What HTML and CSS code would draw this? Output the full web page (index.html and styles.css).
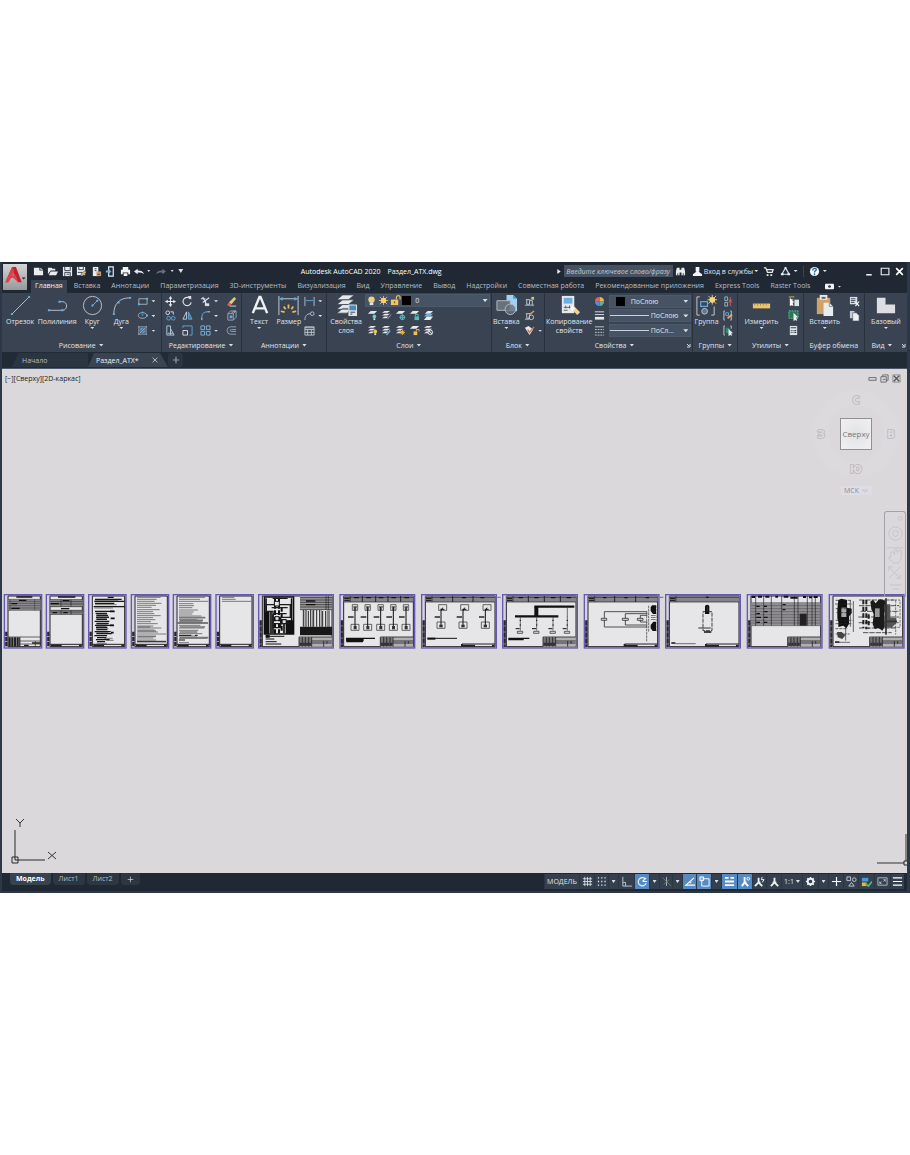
FILE: index.html
```html
<!DOCTYPE html>
<html lang="ru">
<head>
<meta charset="utf-8">
<title>Autodesk AutoCAD 2020 — Раздел_АТХ.dwg</title>
<link rel="stylesheet" href="styles.css">
</head>
<body>
<main class="window">
<header class="top">
  <button class="app-button" aria-label="Меню приложения"><svg viewBox="0 0 24 27"><path d="M2 19 9 3h4l6 16h-4l-2-5H8l-3 5z" fill="#c2222c"/><path d="m9 3 2 4-2 4 4 1 2 7-5-5H8l-3 5H2z" fill="#e5404a"/><path d="m10 8 2 4H9z" fill="#9c8386"/><path d="M19 14h4l-2 2z" fill="#222"/></svg></button>
  <div class="titlebar">
    <div class="quick">
      <button aria-label="Создать"><svg viewBox="0 0 12 12"><path d="M1 2h6v3h4v5H1z" fill="#e9ebee"/><path d="M8 2v2h3z" fill="#e9ebee"/></svg></button>
      <button aria-label="Открыть"><svg viewBox="0 0 12 12"><path d="M1 2h4l1 1h3v2H4L1 9z" fill="#e9ebee"/><path d="M4 6h8l-2 4H2z" fill="#e9ebee"/></svg></button>
      <button aria-label="Сохранить"><svg viewBox="0 0 12 12"><path d="M1 1h10v10H1z" fill="#e9ebee"/><path d="M3 1v4h6V1M3 11V7h6v4M5 9h3" fill="none" stroke="#35404d"/></svg></button>
      <button aria-label="Сохранить как"><svg viewBox="0 0 12 12"><path d="M1 1h9v9H1z" fill="#e9ebee"/><path d="M3 1v3h5V1M2 7h5" fill="none" stroke="#35404d"/><path d="m5 11 1-3 4-3 1 2-4 4z" fill="#e2b56b" stroke="#222b36" stroke-width=".5"/></svg></button>
      <button aria-label="Открыть из веба"><svg viewBox="0 0 12 12"><path d="M2 1h6v10H2z" fill="#e9ebee"/><path d="M4 3h2M4 5h2" stroke="#35404d"/><path d="M6 6h5v5H6z" fill="#d29c69"/><path d="M7 9h3" stroke="#35404d"/></svg></button>
      <button aria-label="Сохранить в вебе"><svg viewBox="0 0 12 12"><path d="M4 1h5v10H4z" fill="none" stroke="#e9ebee" stroke-width="1.3"/><path d="M1 5h3V3l3 3-3 3V7H1z" fill="#69b5e9"/></svg></button>
      <button aria-label="Печать"><svg viewBox="0 0 12 12"><path d="M3 1h6v3H3zM1 4h10v5H9V7H3v2H1zM4 8h4v3H4z" fill="#f1f3f5"/></svg></button>
      <button aria-label="Отменить"><svg viewBox="0 0 12 12"><path d="m0 6 4-3v2c4 0 6 1 7 4-2-2-4-2-7-2v2z" fill="#e9ebee"/></svg></button>
    </div>
    <div class="history"><i class="caret"></i><button aria-label="Повторить"><svg viewBox="0 0 12 12"><path d="M12 6 8 3v2C4 5 2 6 1 9c2-2 4-2 7-2v2z" fill="#66717d"/></svg></button><i class="caret"></i><i class="caret wide"></i></div>
    <h1 class="title"><span>Autodesk AutoCAD 2020</span><span>Раздел_АТХ.dwg</span></h1>
    <div class="search"><svg class="play" viewBox="0 0 4 6"><path d="M0 0v6l4-3z" fill="#e9ebee"/></svg><input type="text" aria-label="Поиск" placeholder="Введите ключевое слово/фразу"></div>
    <div class="account">
      <button aria-label="Найти"><svg viewBox="0 0 12 12"><path d="M2 2h3v8H1V6zM7 2h3l1 4v4H7zM5 4h2v3H5z" fill="#e9ebee"/><path d="M3 8v2M9 8v2" stroke="#26303c"/></svg></button>
      <button class="login"><svg viewBox="0 0 12 12"><path d="M4 1h4v5H7l4 3v2H1V9l4-3H4z" fill="#f1f3f5"/></svg>Вход в службы <i class="caret"></i></button>
      <button aria-label="Магазин"><svg viewBox="0 0 12 12"><path d="M1 2h2l2 5h5l1-3H4" fill="none" stroke="#e9ebee" stroke-width="1.4"/><path d="M4 9h2v2H4zM8 9h2v2H8z" fill="#e9ebee"/></svg></button>
      <button class="with-caret" aria-label="Autodesk"><svg viewBox="0 0 12 12"><path d="m6 2 4 7H2z" fill="none" stroke="#cfe0ee" stroke-width="1.3"/><path d="M5 1h2v2H5zM1 8h3v2H1zM8 8h3v2H8z" fill="#e9ebee"/></svg><i class="caret"></i></button>
      <button class="with-caret help" aria-label="Справка"><svg viewBox="0 0 12 12"><circle cx="6" cy="6" r="5" fill="#f2f6fb"/><path d="M4 5c0-3 4-3 4-1 0 1-2 1-2 3M6 8v2" fill="none" stroke="#2b6399" stroke-width="1.4"/></svg><i class="caret"></i></button>
    </div>
    <div class="winctl">
      <button aria-label="Свернуть"><svg viewBox="0 0 10 10"><path d="M2 8h5" stroke="#f2f3f4" stroke-width="1.4"/></svg></button>
      <button aria-label="Развернуть"><svg viewBox="0 0 10 10"><path d="M2 2h7v6H2z" fill="none" stroke="#f2f3f4"/></svg></button>
      <button aria-label="Закрыть"><svg viewBox="0 0 10 10"><path d="m2 2 6 6M8 2 2 8" stroke="#fff" stroke-width="1.5"/></svg></button>
    </div>
  </div>
  <nav class="tabs">
    <a href="#home" class="active">Главная</a><a href="#insert">Вставка</a><a href="#annotate">Аннотации</a><a href="#param">Параметризация</a><a href="#tools3d">3D-инструменты</a><a href="#visual">Визуализация</a><a href="#view">Вид</a><a href="#manage">Управление</a><a href="#output">Вывод</a><a href="#addins">Надстройки</a><a href="#collab">Совместная работа</a><a href="#apps">Рекомендованные приложения</a><a href="#express">Express Tools</a><a href="#raster">Raster Tools</a>
    <button class="with-caret" aria-label="Вид ленты"><svg viewBox="0 0 10 10"><rect x="0" y="2" width="10" height="6" rx="1" fill="#f2f3f4"/><circle cx="5" cy="5" r="1.5" fill="#26303c"/></svg><i class="caret"></i></button>
  </nav>
</header>

<div class="ribbon">
  <section class="panel">
    <div class="body draw">
      <button class="tool"><svg viewBox="0 0 24 24"><path d="M3 21 21 3" stroke="#b9c1ca"/><path d="M2 20h2v2H2zM20 2h2v2h-2z" fill="#63b4f0"/></svg>Отрезок</button>
      <button class="tool"><svg viewBox="0 0 24 24"><path d="M3 17h14c6 0 6-9 0-9h-3" fill="none" stroke="#b9c1ca"/><path d="M2 16h2v2H2zM16 16h2v2h-2zM13 7h2v2h-2z" fill="#63b4f0"/></svg>Полилиния</button>
      <button class="tool"><svg viewBox="0 0 24 24"><circle cx="12" cy="12" r="9.5" fill="none" stroke="#b9c1ca"/><path d="m12 12 5-5" stroke="#63b4f0"/><path d="M11 11h2v2h-2zM16 6h2v2h-2z" fill="#63b4f0"/></svg>Круг<i class="caret"></i></button>
      <button class="tool"><svg viewBox="0 0 24 24"><path d="M4 21C4 10 10 4 21 4" fill="none" stroke="#b9c1ca"/><path d="M3 20h2v2H3zM8 8h2v2H8zM20 3h2v2h-2z" fill="#63b4f0"/></svg>Дуга<i class="caret"></i></button>
      <div class="stack">
        <button class="with-caret" aria-label="Прямоугольник"><svg viewBox="0 0 12 12"><path d="M2 3h9v6H2z" fill="none" stroke="#aab4be"/><path d="M1 8h2v2H1zM10 2h2v2h-2z" fill="#63b4f0"/></svg><i class="caret"></i></button>
        <button class="with-caret" aria-label="Эллипс"><svg viewBox="0 0 12 12"><ellipse cx="6" cy="6" rx="4.5" ry="3" fill="none" stroke="#aab4be"/><path d="M5 2h2v1H5zM5 5h2v1H5zM10 5h2v2h-2z" fill="#63b4f0"/></svg><i class="caret"></i></button>
        <button class="with-caret" aria-label="Штриховка"><svg viewBox="0 0 12 12"><path d="M3 3h6v6H3z" fill="#447ba6"/><path d="M2 1v10M10 1v10M1 2h10M1 10h10M3 6l3-3M3 9l6-6M6 9l3-3" fill="none" stroke="#aab4be" stroke-width=".8"/></svg><i class="caret"></i></button>
      </div>
    </div>
    <button class="caption">Рисование <i class="caret"></i></button>
  </section>

  <section class="panel">
    <div class="body edit">
      <button aria-label="Перенести"><svg viewBox="0 0 12 12"><path d="M6 1v10M1 6h10" stroke="#e8eaed" stroke-width="1.2"/><path d="m6 0 2 3H4zM6 12l2-3H4zM0 6l3-2v4zM12 6 9 4v4z" fill="#e8eaed"/></svg></button>
      <button aria-label="Повернуть"><svg viewBox="0 0 12 12"><path d="M9 3a4.5 4.5 0 1 0 1 4" fill="none" stroke="#dde1e5" stroke-width="1.3"/><path d="M6 0h4v4z" fill="#dde1e5"/></svg></button>
      <button class="with-caret" aria-label="Обрезать"><svg viewBox="0 0 12 12"><path d="m3 1 5 10M10 2 3 7M1 3h5M6 5v6" stroke="#dde1e5" stroke-width="1.3"/><path d="M7 8h3v3H7z" fill="#dde1e5"/></svg><i class="caret"></i></button>
      <button aria-label="Стереть"><svg viewBox="0 0 12 12"><path d="m3 7 6-6 2 2-5 6z" fill="#e9c57d"/><path d="m3 7 3 2-2 2-3-1z" fill="#e35d4b"/><path d="M4 11h7" stroke="#dde1e5"/></svg></button>
      <button aria-label="Копировать"><svg viewBox="0 0 12 12"><circle cx="3" cy="3" r="2" fill="none" stroke="#dde1e5"/><circle cx="4" cy="9" r="2" fill="none" stroke="#63a8dc"/><circle cx="9" cy="9" r="2" fill="none" stroke="#63a8dc"/><path d="M6 2h3v3" fill="none" stroke="#dde1e5"/></svg></button>
      <button aria-label="Зеркало"><svg viewBox="0 0 12 12"><path d="M5 2v8H1z" fill="none" stroke="#c6d0d9"/><path d="M7 2v8h4z" fill="#397cab" stroke="#63a8dc"/></svg></button>
      <button class="with-caret" aria-label="Сопряжение"><svg viewBox="0 0 12 12"><path d="M2 11V8" stroke="#dde1e5"/><path d="M2 8c0-4 2-6 6-6" fill="none" stroke="#63a8dc"/><path d="M8 2h3" stroke="#dde1e5"/></svg><i class="caret"></i></button>
      <button aria-label="Расчленить"><svg viewBox="0 0 12 12"><path d="M2 4h6v7H2zM2 4l3-3h6L8 4M11 1v7l-3 3" fill="none" stroke="#86add0"/><path d="M4 6h3v3H4z" fill="#77a4c9"/><path d="m6 3 4-2" stroke="#e6a660"/></svg></button>
      <button aria-label="Растянуть"><svg viewBox="0 0 12 12"><path d="M2 1h4v10H2zM6 4l4 7H6M3 9h6" fill="none" stroke="#b7c9d7"/></svg></button>
      <button aria-label="Масштаб"><svg viewBox="0 0 12 12"><path d="M1 3V1h10v10H8" fill="none" stroke="#63a8dc"/><path d="M1 6h5v5H1z" fill="none" stroke="#dde1e5"/></svg></button>
      <button class="with-caret" aria-label="Массив"><svg viewBox="0 0 12 12"><path d="M1 1h4v4H1zM7 1h4v4H7zM1 7h4v4H1zM7 7h4v4H7z" fill="none" stroke="#82b5dc"/></svg><i class="caret"></i></button>
      <button aria-label="Смещение"><svg viewBox="0 0 12 12"><path d="M11 2H5c-5 0-5 8 0 8h6M11 5H6c-2 0-2 2 0 2h5" fill="none" stroke="#8faabd"/></svg></button>
    </div>
    <button class="caption">Редактирование <i class="caret"></i></button>
  </section>

  <section class="panel">
    <div class="body annot">
      <button class="tool"><svg viewBox="0 0 24 24"><path d="m5 20 7-17h1l7 17M7 15h11" fill="none" stroke="#f0f2f4" stroke-width="2.5"/></svg>Текст<i class="caret"></i></button>
      <button class="tool"><svg viewBox="0 0 24 24"><path d="M2 2v20M22 2v20M3 5h18" stroke="#c6cdd4" fill="none"/><path d="m2 5 4-2v4zM22 5l-4-2v4z" fill="#63a8dc"/><path d="M12 11v4M7 13l2 3M17 13l-2 3M4 18l4 1M20 18l-4 1" stroke="#e8ba5d" stroke-width="1.8"/></svg>Размер</button>
      <div class="stack">
        <button class="with-caret" aria-label="Линейный размер"><svg viewBox="0 0 12 12"><path d="M1 1v10M11 1v10" stroke="#b6c2cc"/><path d="M2 5h8" stroke="#63a8dc"/></svg><i class="caret"></i></button>
        <button class="with-caret" aria-label="Выноска"><svg viewBox="0 0 12 12"><path d="M1 11c0-4 2-7 6-7" fill="none" stroke="#b6c2cc"/><circle cx="9" cy="4" r="2" fill="none" stroke="#b6c2cc"/></svg><i class="caret"></i></button>
        <button aria-label="Таблица"><svg viewBox="0 0 12 12"><path d="M1 2h10v9H1zM1 5h10M1 8h10M4 5v6M8 5v6M1 3h10" fill="none" stroke="#c0c9d1"/></svg></button>
      </div>
    </div>
    <button class="caption">Аннотации <i class="caret"></i></button>
  </section>

  <section class="panel">
    <div class="body layers">
      <button class="tool"><svg viewBox="0 0 24 24"><path d="M8 1h12l-6 5H2zM8 6h12l-6 5H2zM8 11h12l-6 5H2zM8 15h8l-3 5H2z" fill="#e6e8ea" stroke="#3a4352" stroke-width=".7"/><path d="M14 11h9v12h-9z" fill="#dce3e9"/><path d="M15 12h7v5h-7z" fill="#438bc4"/><path d="M16 19h5M16 21h2" stroke="#3a4352"/></svg>Свойства слоя</button>
      <div class="layer-side">
        <div class="combo layer-combo">
          <svg viewBox="0 0 12 12"><circle cx="6" cy="5" r="3.5" fill="#f2cf7b"/><path d="M4 8h4v3H4z" fill="#dfe2e5"/></svg>
          <svg viewBox="0 0 12 12"><path d="M6 1v10M1 6h10M2 2l8 8M10 2l-8 8" stroke="#e8b958"/><circle cx="6" cy="6" r="3" fill="#f5cf73"/></svg>
          <svg viewBox="0 0 12 12"><path d="M7 5V3c0-3 4-3 4 0v2" fill="none" stroke="#e8b958" stroke-width="1.3"/><path d="M1 5h8v6H1z" fill="#f1c365"/><path d="M5 7v2" stroke="#463b29"/></svg>
          <i class="swatch"></i><select aria-label="Слой"><option>0</option></select><i class="caret"></i>
        </div>
        <div class="layer-grid">
          <button aria-label="Отключить"><svg viewBox="0 0 12 12"><path d="M4 1h7L8 4H1z" fill="#e6e8ea"/><circle cx="8" cy="7" r="2" fill="#5fd0cb"/><path d="M7 9h2v2H7z" fill="#dfe2e5"/></svg></button>
          <button aria-label="Изолировать"><svg viewBox="0 0 12 12"><path d="M4 1h6L7 3H1zM4 4h6L7 6H1zM4 7h4L6 9H1z" fill="#e6e8ea"/><path d="m7 10 4-5" stroke="#9caab8"/></svg></button>
          <button aria-label="Заморозить"><svg viewBox="0 0 12 12"><path d="M4 1h7L8 4H1z" fill="#e6e8ea"/><circle cx="8" cy="8" r="2.5" fill="none" stroke="#5dc3c4"/><path d="M5 8h6M8 5v6" stroke="#5dc3c4"/></svg></button>
          <button aria-label="Блокировать"><svg viewBox="0 0 12 12"><path d="M4 1h7L8 4H1z" fill="#e6e8ea"/><path d="M6 7h5v4H6z" fill="#59bdb7"/><path d="M7 7V5h3v2" fill="none" stroke="#59bdb7"/></svg></button>
          <button aria-label="Сделать текущим"><svg viewBox="0 0 12 12"><path d="M5 1h6L8 4H2z" fill="#e6e8ea"/><path d="M4 4h7L8 7H1z" fill="#6caee1"/><path d="M4 7h7l-3 4H1z" fill="#e6e8ea"/></svg></button>
          <button aria-label="Включить все"><svg viewBox="0 0 12 12"><path d="M4 1h6L7 3H1zM4 4h5L6 6H1zM4 7h3L6 9H1z" fill="#e6e8ea"/><circle cx="9" cy="7" r="2" fill="#f0c462"/><path d="M8 9h2v2H8z" fill="#dfe2e5"/></svg></button>
          <button aria-label="Отключить изоляцию"><svg viewBox="0 0 12 12"><path d="M4 1h6L7 3H1zM4 4h6L7 6H1zM4 7h4L6 9H1z" fill="#e6e8ea"/><path d="m6 11 4-5" stroke="#6cb4e6" stroke-width="1.5"/></svg></button>
          <button aria-label="Разморозить"><svg viewBox="0 0 12 12"><path d="M4 1h6L7 3H1zM4 4h5L6 6H1zM4 7h3L6 9H1z" fill="#e6e8ea"/><path d="M8 5v6M5 8h6M6 6l4 4M10 6l-4 4" stroke="#efc15c"/></svg></button>
          <button aria-label="Разблокировать"><svg viewBox="0 0 12 12"><path d="M4 1h7L8 4H1z" fill="#e6e8ea"/><path d="M5 7h4v4H5z" fill="#efc15c"/><path d="M8 7V5h3v2" fill="none" stroke="#efc15c"/></svg></button>
          <button aria-label="Копировать слой"><svg viewBox="0 0 12 12"><path d="M4 1h6L7 3H1zM4 4h6L7 6H1zM4 7h4L6 9H1z" fill="#e6e8ea"/><circle cx="8" cy="8" r="2.5" fill="#5a6472" stroke="#e6e8ea"/><path d="m6 6 4 4" stroke="#e6e8ea"/></svg></button>
        </div>
      </div>
    </div>
    <button class="caption">Слои <i class="caret"></i></button>
  </section>

  <section class="panel">
    <div class="body block">
      <button class="tool"><svg viewBox="0 0 24 24"><path d="M12 1h7l4 4v13H12z" fill="#a1d2f1"/><path d="M19 1v4h4" fill="#4a92c9"/><path d="M2 7h14v10H2z" fill="#67717d" stroke="#b2bac3"/><circle cx="16" cy="16" r="5.5" fill="#66717dcc" stroke="#b2bac3"/></svg>Вставка<i class="caret"></i></button>
      <div class="stack">
        <button aria-label="Создать блок"><svg viewBox="0 0 12 12"><path d="M1 10h10M3 4v5h3V5h3v5M2 4h5" fill="none" stroke="#c5ccd3"/><path d="M8 1h3v3H8z" fill="#efc15c"/></svg></button>
        <button aria-label="Редактор блоков"><svg viewBox="0 0 12 12"><path d="M1 10h5M3 4v5h3V5M2 4h5" fill="none" stroke="#c5ccd3"/><circle cx="8" cy="8" r="2.5" fill="none" stroke="#c5ccd3"/><path d="m6 5 5-4" stroke="#e6a660" stroke-width="1.5"/></svg></button>
        <button class="with-caret" aria-label="Атрибуты"><svg viewBox="0 0 12 12"><path d="m1 3 4-2 5 4-4 6z" fill="#e6e8ea"/><path d="m4 5 2 3 5-6" fill="none" stroke="#cc7850" stroke-width="1.5"/></svg><i class="caret"></i></button>
      </div>
    </div>
    <button class="caption">Блок <i class="caret"></i></button>
  </section>

  <section class="panel">
    <div class="body props">
      <button class="tool"><svg viewBox="0 0 24 24"><path d="M4 2h13v18H4z" fill="#e6e8ea"/><path d="M6 4h9v6H6z" fill="#69afe0"/><path d="M6 14h8M6 17h4M8 12v3M12 12v3" stroke="#59636f"/><path d="m13 14 3-2 7 7-3 3z" fill="#f3d489"/><path d="m13 14 2-2 3 3-3 3z" fill="#fff"/></svg>Копирование свойств</button>
      <div class="prop-grid">
        <svg viewBox="0 0 12 12"><path d="M6 6V1a5 5 0 0 1 5 5z" fill="#f0b74b"/><path d="M6 6h5a5 5 0 0 1-5 5z" fill="#55b6a7"/><path d="M6 6v5a5 5 0 0 1-5-5z" fill="#598bdb"/><path d="M6 6H1a5 5 0 0 1 5-5z" fill="#e06565"/></svg>
        <div class="combo"><i class="swatch"></i><select aria-label="Цвет"><option>ПоСлою</option></select><i class="caret"></i></div>
        <svg viewBox="0 0 12 12"><path d="M1 2h10M1 5h10" stroke="#e3e6e9"/><path d="M1 9h10" stroke="#e3e6e9" stroke-width="3"/></svg>
        <div class="combo"><i class="rule"></i><select aria-label="Вес линий"><option>ПоСлою</option></select><i class="caret"></i></div>
        <svg viewBox="0 0 12 12"><path d="M1 2h10" stroke="#c5ccd3"/><path d="M1 5h10M1 8h10M1 11h10" stroke="#c5ccd3" stroke-dasharray="2 1"/></svg>
        <div class="combo"><i class="rule"></i><select aria-label="Тип линий"><option>ПоСл...</option></select><i class="caret"></i></div>
      </div>
    </div>
    <div class="caption with-launcher"><button>Свойства <i class="caret"></i></button><button class="launcher" aria-label="Параметры свойств"><svg viewBox="0 0 6 6"><path d="M2 2l2 2M5 2v3H2" fill="none" stroke="#d5dae0"/></svg></button></div>
  </section>

  <section class="panel">
    <div class="body pair">
      <button class="tool"><svg viewBox="0 0 24 24"><path d="M5 3H2v19h3M17 22h3V13" fill="none" stroke="#c5ccd3"/><path d="M6 8h7v5H6z" fill="none" stroke="#63a8dc" stroke-width="1.3"/><circle cx="10" cy="18" r="3" fill="#687582" stroke="#b6c2cc"/><path d="M18 1v10M13 6h10M14 2l8 8M22 2l-8 8" stroke="#f3c465"/><circle cx="18" cy="6" r="3" fill="#f9d57e"/></svg>Группа</button>
      <div class="stack">
        <button aria-label="Разгруппировать"><svg viewBox="0 0 12 12"><path d="M2 1h3v4H2zM2 7h3v4H2z" fill="none" stroke="#9fb4c5"/><path d="M8 1v10M6 4l4 3M10 4 6 7" stroke="#cf5d64"/></svg></button>
        <button aria-label="Редактировать группу"><svg viewBox="0 0 12 12"><path d="M2 1H1v10h1M8 1h1v10H8" fill="none" stroke="#c5ccd3"/><path d="M3 3h3v3H3z" fill="none" stroke="#63a8dc"/><path d="m5 9 5-4" stroke="#e8a560" stroke-width="2"/></svg></button>
        <button aria-label="Выбор группы"><svg viewBox="0 0 12 12"><path d="M2 1H1v10h1M8 1h1v3" fill="none" stroke="#c5ccd3"/><path d="M3 3h4v6H3z" fill="#388766"/><path d="m6 4 5 5H9l1 3-2-1-2 1z" fill="#e9ecef"/></svg></button>
      </div>
    </div>
    <button class="caption">Группы <i class="caret"></i></button>
  </section>

  <section class="panel">
    <div class="body pair utilities">
      <button class="tool"><svg viewBox="0 0 24 24"><path d="M3 10h18v5H3z" fill="#eec46b"/><path d="M5 10v2M8 10v2M11 10v2M14 10v2M17 10v2" stroke="#a88b4c"/></svg>Измерить<i class="caret"></i></button>
      <div class="stack">
        <button aria-label="Выбрать подобные"><svg viewBox="0 0 12 12"><path d="M1 1h6M2 4h4" stroke="#e8ba5d"/><path d="M7 4h5v7H7z" fill="#dde2e8"/><path d="m2 2 5 5H5l1 4-2-1-2 1z" fill="#fff"/></svg></button>
        <button aria-label="Быстрый выбор"><svg viewBox="0 0 12 12"><path d="M1 1h10v8H1z" fill="#2b7557" stroke="#58c894" stroke-dasharray="2 1"/><path d="m6 3 5 5H9l1 4-2-1-2 1z" fill="#e9ecef"/></svg></button>
        <button aria-label="Калькулятор"><svg viewBox="0 0 12 12"><path d="M2 1h8v10H2z" fill="#dde2e8"/><path d="M3 3h6M3 6h1M5 6h1M7 6h2M3 8h1M5 8h1M7 8h2" stroke="#3a4352" stroke-width="1.2"/></svg></button>
      </div>
    </div>
    <button class="caption">Утилиты <i class="caret"></i></button>
  </section>

  <section class="panel">
    <div class="body pair clipboard">
      <button class="tool"><svg viewBox="0 0 24 24"><path d="M4 4h14v17H4z" fill="#d1a16a"/><path d="M7 1h8v5H7z" fill="#e6e8ea"/><path d="M9 3h4v2H9z" fill="#59636f"/><path d="M11 9h6l4 4v10H11z" fill="#e9ecef"/><path d="M17 9v4h4" fill="none" stroke="#858e99"/></svg>Вставить<i class="caret"></i></button>
      <div class="stack">
        <button aria-label="Вырезать"><svg viewBox="0 0 12 12"><path d="M1 1h8v8H1z" fill="#dde2e8"/><path d="M2 3h5M2 5h5M2 7h4" stroke="#3a4352"/><path d="m7 6 4 5M11 6l-4 5" stroke="#f3f4f5" stroke-width="1.3"/></svg></button>
        <button aria-label="Копировать"><svg viewBox="0 0 12 12"><path d="M1 1h5v8H1z" fill="#c5ccd3"/><path d="M4 3h4l3 3v6H4z" fill="#eef0f2" stroke="#3a4352" stroke-width=".6"/></svg></button>
      </div>
    </div>
    <span class="caption">Буфер обмена</span>
  </section>

  <section class="panel">
    <div class="body single">
      <button class="tool"><svg viewBox="0 0 24 24"><path d="M3 4h9v7h10v9H3z" fill="#dcdee1"/></svg>Базовый<i class="caret"></i></button>
    </div>
    <div class="caption with-launcher"><button>Вид <i class="caret"></i></button><button class="launcher" aria-label="Параметры вида"><svg viewBox="0 0 6 6"><path d="M2 2l2 2M5 2v3H2" fill="none" stroke="#d5dae0"/></svg></button></div>
  </section>
</div>

<nav class="files">
  <a href="#start">Начало</a>
  <div class="current"><a href="#drawing">Раздел_АТХ*</a><button aria-label="Закрыть файл"><svg viewBox="0 0 10 10"><path d="m2 2 6 6M8 2 2 8" stroke="#b6bec6" stroke-width="1.2"/></svg></button></div>
  <button class="add" aria-label="Новый файл"><svg viewBox="0 0 10 10"><path d="M5 1v8M1 5h8" stroke="#8e979f" stroke-width="1.5"/></svg></button>
</nav>

<div class="canvas">
  <svg class="sheets" viewBox="6 0 2715 216" role="img" aria-label="Листы чертежа">
    <defs>
      <g id="small">
        <rect x="1" y="1" width="112" height="160" fill="#d5d2e2" stroke="#6558b5" stroke-width="4"/>
        <path d="M12 5h97v152H12z" fill="#e6e5e7" stroke="#252429" stroke-width="3"/>
        <path d="M7 112v46" stroke="#29272f" stroke-width="7" stroke-dasharray="13 2"/>
      </g>
      <g id="large">
        <rect x="1" y="1" width="224" height="160" fill="#d5d2e2" stroke="#6558b5" stroke-width="4"/>
        <path d="M12 5h209v152H12z" fill="#e6e5e7" stroke="#252429" stroke-width="3"/>
        <path d="M7 78v80" stroke="#29272f" stroke-width="7" stroke-dasharray="16 2"/>
      </g>
      <g id="foot"><path d="M12 150h97" stroke="#222" stroke-width="3"/><path d="M15 154h32M99 154h8" stroke="#222" stroke-width="5"/></g>
      <g id="stamp"><path d="M122 128h98v29h-98z" fill="#b1afb3"/><path d="M122 128h98M122 134h37M122 140h98M122 146h98M122 152h37M122 128v29M132 128v29M141 128v29M151 128v29M160 128v29M196 140v17M206 140v8" stroke="#222" stroke-width="2.5"/><path d="M124 150h34" stroke="#333" stroke-width="9" stroke-dasharray="7 2"/></g>
      <g id="band"><path d="M12 5h209v18H12z" fill="#858387"/><path d="M12 9h209M12 23h209M32 5v18" stroke="#222" stroke-width="2"/><path d="M14 12h16M14 18h16" stroke="#222" stroke-width="4"/></g>
      <g id="unit"><path d="M-8 31h16v17H-8zM-12 90h24v18h-24z" fill="none" stroke="#262626" stroke-width="2"/><path d="M0 38v66M-5 38H6M-4 44h8" stroke="#111" stroke-width="3"/><path d="M-4 95h9v10h-9z" fill="#333"/><path d="M-21 68h17" stroke="#111" stroke-width="4"/></g>
      <g id="unit-wide"><path d="M-10 31h24v17h-24zM-15 83h24v19h-24z" fill="none" stroke="#262626" stroke-width="2"/><path d="M2 40-3 50v45M-5 45H7" fill="none" stroke="#111" stroke-width="3"/><path d="M-8 91h10v8H-8z" fill="#333"/><path d="M-22 68h16" stroke="#111" stroke-width="4"/></g>
      <g id="short-foot"><path d="M122 149h99" stroke="#222" stroke-width="3"/><path d="M122 149v8M125 154h36M212 154h7" stroke="#222" stroke-width="6"/></g>
      <g id="lamp"><path d="M0 67v42" stroke="#333" stroke-width="2"/><path d="M-9 111H7v6H-9z" fill="#ddd" stroke="#222" stroke-width="2"/><path d="M-14 103h12M-2 78h4M-2 92h4" stroke="#111" stroke-width="3"/></g>
    </defs>

    <g transform="translate(12 28)"><use href="#small"/><path d="M12 15h98v33H12z" fill="#8c8a8e"/><path d="M12 15h98M12 21h98M12 27h98M12 34h98M12 41h98M12 48h98M18 15v33M92 15v33" stroke="#333" stroke-width="1.5"/><path d="M37 8h48M45 18h22M22 28h18M22 42h25" stroke="#111" stroke-width="4"/><path d="M12 128h97M12 134h36M12 140h97M12 146h36M12 152h36M48 149h61M48 128v29M94 140v17" stroke="#222" stroke-width="2"/><path d="M14 142h34" stroke="#222" stroke-width="27" stroke-dasharray="6 2"/><path d="M84 146h25M60 153h14" stroke="#222" stroke-width="4"/></g>
    <g transform="translate(138 28)"><use href="#small"/><use href="#foot"/><path d="M12 16h98v21H12zM12 48h98v12H12z" fill="#918f93"/><path d="M12 16h98M12 22h98M12 29h98M12 37h98M12 48h98M12 60h98M12 53h98M45 16v20M75 16v20M45 48v12M75 48v12" stroke="#222" stroke-width="2"/><path d="M36 8h52M50 19h20M14 28h25M45 43h25M20 55h13M52 55h13" stroke="#111" stroke-width="4"/></g>
    <g transform="translate(265 28)"><use href="#small"/><use href="#foot"/><path d="M58 9h18M20 15h80M18 21h90M20 27h58M16 37h94M22 57h34M20 51h55M24 63h35M23 69h39M24 75h32M19 81h44M24 87h37M20 93h55M23 99h34M24 106h33M19 112h48M24 118h46M18 124h38M26 130h28M23 136h41M26 142h24" stroke="#171717" stroke-width="4"/><path d="M20 18h70M20 31h65M18 41h56M24 60h32M24 66h37M25 72h31M24 90h34M24 96h31M23 103h37M24 115h36M48 132h25M54 138h22M25 147h30" stroke="#474747" stroke-width="2"/><path d="M65 51h14M67 72h12M65 93h12M68 115h8" stroke="#111" stroke-width="5"/></g>
    <g transform="translate(393 28)"><use href="#small"/><use href="#foot"/><path d="M18 9h71M18 15h59M18 21h53M18 27h73M18 33h57M18 39h44M18 46h68M18 52h48M18 58h52M18 64h71M18 70h48M18 76h55M18 82h42M18 88h62M18 95h49M18 101h73M18 107h52M18 113h63M18 119h87M18 125h57M18 131h49M18 137h57M18 143h88" fill="none" stroke="#444" stroke-width="2"/><path d="M20 98h38M20 110h55M20 127h55" stroke="#777" stroke-width="4"/><path d="M18 141h87" stroke="#222" stroke-width="3"/></g>
    <g transform="translate(519 28)"><use href="#small"/><use href="#foot"/><path d="M18 9h78M18 15h63M18 21h88M18 28h43M18 34h45M18 40h40M18 47h57M18 53h44M18 59h40M18 65h67M18 75h55M18 82h69M18 93h64M18 101h75M18 108h58M18 118h70M18 125h54M18 132h84M18 145h30" stroke="#444" stroke-width="2"/><path d="M18 70h79M20 78h70M20 98h76M20 113h53M20 130h86" stroke="#777" stroke-width="5"/><path d="M14 86h91M18 123h37M66 123h8M18 137h18" stroke="#111" stroke-width="3"/></g>
    <g transform="translate(647 28)"><use href="#small"/><use href="#foot"/><path d="M19 9h37M19 15h41M19 21h87" stroke="#444" stroke-width="2"/></g>

    <g transform="translate(775 28)"><use href="#large"/>
      <path d="M18 8h88v111H18z" fill="none" stroke="#111" stroke-width="4"/><path d="M18 52h14v67H18zM82 78h24v41H82z" fill="#111"/><path d="M23 12v105M31 52v65M38 50v67M44 60v57M100 12v105M94 78v39M88 79v38M77 88v29" stroke="#111" stroke-width="5"/><path d="M50 10v108M62 10v107M70 38v76" stroke="#111" stroke-width="6" stroke-dasharray="14 5"/><path d="M24 31h72v38H67v31H44V51H24zM43 12h45M40 40h48M45 58h40M43 76h42M50 88h42" fill="none" stroke="#1b1b1b" stroke-width="4"/><path d="M48 21h15v14H48zM50 67h12v11H50z" fill="#e6e5e7" stroke="#111" stroke-width="3"/><path d="M22 126h56M22 134h26M22 142h33M22 149h47" stroke="#111" stroke-width="3"/><path d="M22 126h12" stroke="#111" stroke-width="9"/>
      <path d="M125 5h96v41h-96z" fill="#9b999d"/><path d="M125 10h96M125 17h96M125 24h96M125 31h96M125 38h96M125 46h96M203 5v41M210 5v41" stroke="#222" stroke-width="2"/><path d="M143 20h28M143 31h28" stroke="#111" stroke-width="4"/><path d="M135 47v50M143 47v50M150 50v47M157 47v50M166 47v50M175 47v50M184 47v50M193 50v47M202 50v47M212 48v50" stroke="#222" stroke-width="3"/><path d="M140 48v50M162 48v50M189 48v50M207 48v50" stroke="#777" stroke-width="3"/><path d="M125 97h96v26h-96z" fill="#181818"/><use href="#stamp"/></g>
    <g transform="translate(1019 28)"><use href="#large"/><use href="#band"/><path d="M68 5v18M108 5v18M145 5v18M183 5v18" stroke="#222" stroke-width="3"/><path d="M43 10h15M80 10h14M117 10h14M155 10h14M194 10h14" stroke="#111" stroke-width="4"/><use href="#unit" x="46"/><use href="#unit" x="84"/><use href="#unit" x="123"/><use href="#unit" x="161"/><use href="#unit" x="199"/><path d="M19 132h87M20 142h50" stroke="#111" stroke-width="4"/><path d="M19 137h53" stroke="#111" stroke-width="7"/><use href="#stamp"/></g>
    <g transform="translate(1264 28)"><use href="#large"/><use href="#band"/><path d="M94 5v18M155 5v18" stroke="#222" stroke-width="3"/><path d="M57 10h14M122 10h12M177 10h12" stroke="#111" stroke-width="4"/><use href="#unit-wide" x="62"/><use href="#unit-wide" x="128"/><use href="#unit-wide" x="195"/><path d="M19 132h88" stroke="#111" stroke-width="3"/><path d="M18 133h24" stroke="#111" stroke-width="6"/><use href="#short-foot"/></g>
    <g transform="translate(1507 28)"><use href="#large"/><use href="#band"/><path d="M78 5v18M126 5v18M174 5v18" stroke="#222" stroke-width="3"/><path d="M49 10h13M96 10h13M146 10h13M193 10h13" stroke="#111" stroke-width="4"/><path d="M38 66h130M96 37h120" stroke="#111" stroke-width="7"/><path d="M96 37h12v29H96z" fill="#111"/><use href="#lamp" x="54"/><use href="#lamp" x="103"/><use href="#lamp" x="152"/><use href="#lamp" x="195"/><path d="M195 40v28" stroke="#333" stroke-width="2"/><path d="M18 132h63M18 136h46" stroke="#111" stroke-width="4"/><use href="#stamp"/></g>
    <g transform="translate(1752 28)"><use href="#large"/><use href="#band"/><path d="M92 5v18M155 5v18" stroke="#222" stroke-width="3"/><path d="M57 10h10M121 10h10M185 10h10" stroke="#111" stroke-width="4"/><path d="M190 52H61v46h129M190 58h-66v34h66M190 63h-21v20h21" fill="none" stroke="#333" stroke-width="2.5"/><path d="M52 72h16v6H52zM115 72h18v6h-18zM160 72h17v6h-17z" fill="#ddd" stroke="#111" stroke-width="2"/><path d="M194 34v80M188 53v88M219 33v79" stroke="#333" stroke-width="2" stroke-dasharray="8 2"/><path d="m200 39 4-6h12v26h-9l-7-9zM200 92l8-10h8v28h-10l-6-8z" fill="#111"/><path d="M208 62v18" stroke="#555" stroke-width="14" stroke-dasharray="2 4"/><use href="#short-foot"/></g>
    <g transform="translate(1996 28)"><use href="#large"/><use href="#band"/><path d="M122 9h8" stroke="#111" stroke-width="4"/><path d="M119 35q7-8 13 0v24h-13z" fill="#111"/><path d="M113 52h27v57h-27z" fill="none" stroke="#222" stroke-width="2.5" stroke-dasharray="12 3"/><path d="M126 35v16M99 101h37" stroke="#333" stroke-width="3"/><path d="M116 113h22M18 146h12" stroke="#111" stroke-width="4"/><path d="M30 148h61" stroke="#333" stroke-width="2"/><use href="#short-foot"/></g>
    <g transform="translate(2241 28)"><use href="#large"/><path d="M12 25h209v69H12z" fill="#929094"/><path d="M12 25h209M12 34h209M12 43h209M12 52h209M12 61h209M12 69h209M12 78h209M12 86h209M12 94h209" stroke="#474747" stroke-width="1.5"/><path d="M26 5v89M50 5v89M73 5v89M104 5v89M142 5v89M153 5v89M181 5v89M195 5v89M205 5v89" stroke="#222" stroke-width="2"/><path d="M14 8h10M33 7h12M55 7h12M85 7h8M110 7h14M130 10h22M168 8h9M186 9h9M200 8h12" stroke="#111" stroke-width="6"/><path d="M28 36h10M28 58h11M28 69h14M28 84h11M51 36h9M52 52h10M51 69h11M51 84h10M107 31h9M107 46h8M160 61h15" stroke="#111" stroke-width="4"/><path d="M158 58h21v36h-21z" fill="#222"/><use href="#stamp"/></g>
    <g transform="translate(2487 28)"><use href="#large"/>
      <path d="M28 17l9-4 17 4v23l14 3v14l-8 9v23l-8 13-9-8-15 4V82l-3-10V45z" fill="#111"/><path d="M37 40h15v28H37z" fill="#aaa"/><path d="M20 18h47M18 29h50M20 43h48M22 55h48M20 78h50M20 88h49M19 103h37M20 119h42" stroke="#222" stroke-width="2" stroke-dasharray="9 3"/><path d="M24 113h14l11 10-9 11-14-5z" fill="#444"/><path d="M64 17v80M73 20v93M50 99v40" stroke="#222" stroke-width="2"/>
      <path d="M90 17h105M90 34h120M95 51h115M88 68h122M89 85h120M90 101h112M102 115h86" stroke="#555" stroke-width="3" stroke-dasharray="16 3"/><path d="M103 17v84M112 17v88M119 60v43" stroke="#222" stroke-width="6" stroke-dasharray="13 7"/><path d="M124 22l8-6 8 11 8-10 6-2 16 4 3 26-8 12 4 37-9 15-11-8-12 3-6-14 3-31-7-14z" fill="#1a1a1a"/><path d="M138 42h14v26h-14z" fill="#999"/><path d="M166 30h18v40h18v16l-14 14h-22z" fill="#555"/><path d="M171 12v109M174 81h30" stroke="#333" stroke-width="5"/><path d="M185 17h28v82h-28M200 17v104" stroke="#444" stroke-width="2" fill="none" stroke-dasharray="8 3"/><path d="M18 144h45" stroke="#333" stroke-width="2"/><path d="M18 143h13" stroke="#111" stroke-width="4"/><use href="#stamp"/></g>
    <path d="M1492 37h10M1980 37h10" stroke="#333" stroke-width="2"/>
  </svg>

  <div class="view-label"><button>[−]</button><button>[Сверху]</button><button>[2D-каркас]</button></div>
  <div class="doc-controls">
    <button aria-label="Свернуть вид"><svg viewBox="0 0 10 10"><path d="M1 4h8v3H1z" fill="none" stroke="#666"/></svg></button>
    <button aria-label="Восстановить вид"><svg viewBox="0 0 10 10"><path d="M1 3h6v6H1zM3 3V1h6v6H7M3 6h3" fill="none" stroke="#666"/></svg></button>
    <button aria-label="Закрыть вид"><svg viewBox="0 0 10 10"><path d="M1 1h8v8H1z" fill="none" stroke="#888"/><path d="m2 2 6 6M8 2 2 8" stroke="#555" stroke-width="1.5"/></svg></button>
  </div>
  <div class="compass">
    <button class="n">С</button><button class="w">З</button><button class="cube">Сверху</button><button class="e">В</button><button class="s">Ю</button>
  </div>
  <button class="ucs-name">МСК <svg viewBox="0 0 8 4"><path d="M1 1h6L4 3z" fill="none" stroke="#c8c6d0"/></svg></button>
  <div class="navbar">
    <svg viewBox="0 0 21 84"><g fill="none" stroke="#c6c4c8"><circle cx="16" cy="4" r="2"/><circle cx="11" cy="20" r="7"/><circle cx="11" cy="20" r="3"/><path d="M2 35h17M6 45v-5l2-1 2 3v-5l2-1 1 4 2-3 2 1v8l-3 5h-5l-5-5 1-2zM4 55l12 12M16 55 4 67M4 55h4M4 55v4M16 67h-4M16 67v-4"/><path d="M5 74h12M8 78h7"/></g></svg>
  </div>
  <svg class="ucs" viewBox="0 0 46 46"><path d="M4 12v30h30M1 39h6v6H1z" fill="none" stroke="#29292b"/><path d="m5 1 4 4 4-4M9 5v4M37 34l8 7M45 34l-8 7" fill="none" stroke="#333"/></svg>
  <svg class="cursor" viewBox="0 0 30 40"><path d="M0 32h27M29 3v27" stroke="#333"/><path d="M27 30h5v4h-5z" fill="none" stroke="#222"/></svg>
</div>

<footer class="bottom">
  <nav class="layouts"><a href="#model" class="active">Модель</a><a href="#sheet1">Лист1</a><a href="#sheet2">Лист2</a><button aria-label="Новый лист"><svg viewBox="0 0 10 10"><path d="M5 1v8M1 5h8" stroke="#d4d9de"/></svg></button></nav>
  <div class="status">
    <button>МОДЕЛЬ</button>
    <button aria-label="Сетка"><svg viewBox="0 0 12 12"><path d="M3 1v10M6 1v10M9 1v10M1 3h10M1 6h10M1 9h10" stroke="#e1e5e9" stroke-width=".9"/></svg></button>
    <button aria-label="Привязка"><svg viewBox="0 0 12 12"><path d="M2 2h9M2 6h9M2 10h9" stroke="#e1e5e9" stroke-width="1.4" stroke-dasharray="1.4 2.2"/></svg></button>
    <button aria-label="Параметры привязки"><i class="caret"></i></button>
    <button aria-label="Орто"><svg viewBox="0 0 12 12"><path d="M2 1v10h10M2 7h3v4" fill="none" stroke="#c4cbd2"/></svg></button>
    <button class="on" aria-label="Полярное отслеживание"><svg viewBox="0 0 12 12"><path d="M9 3a4.5 4.5 0 1 0 1 5M6 6h5M6 6l4-4" fill="none" stroke="#edf4fb" stroke-width="1.2"/></svg></button>
    <button aria-label="Углы"><i class="caret"></i></button>
    <button aria-label="Изометрия"><svg viewBox="0 0 12 12"><path d="m2 2 9 9" stroke="#b35f57"/><path d="M6 1v10" stroke="#aeb6bf"/><path d="m9 4-6 5" stroke="#53895b"/></svg></button>
    <button aria-label="Параметры изометрии"><i class="caret"></i></button>
    <button class="on" aria-label="Объектное отслеживание"><svg viewBox="0 0 12 12"><path d="M11 2 2 10h10" fill="none" stroke="#fff" stroke-width="1.2"/><path d="M6 6h2v2H6z" fill="#d9edff"/></svg></button>
    <button class="on" aria-label="Объектная привязка"><svg viewBox="0 0 12 12"><path d="M3 3h8v8H3z" fill="none" stroke="#fff"/><path d="M1 1h4v4H1z" fill="#79b5e7" stroke="#fff"/></svg></button>
    <button aria-label="Параметры объектной привязки"><i class="caret"></i></button>
    <button class="on" aria-label="Вес линий"><svg viewBox="0 0 12 12"><path d="M1 2h4M7 2h4M1 6h10M1 10h10" stroke="#fff" stroke-width="2"/></svg></button>
    <button class="on" aria-label="Аннотации"><svg viewBox="0 0 12 12"><path d="M5 1v6l-3 4M5 7l4 4M4 7h3" fill="none" stroke="#fff" stroke-width="2"/><circle cx="9" cy="3" r="1.5" fill="none" stroke="#fff"/></svg></button>
    <button aria-label="Автомасштаб"><svg viewBox="0 0 12 12"><path d="M5 2v5l-4 4M5 7l4 4M4 7h3" fill="none" stroke="#eef0f2" stroke-width="2"/><path d="m9 1-1 3h3L9 7" fill="none" stroke="#fff"/></svg></button>
    <button aria-label="Масштаб аннотаций"><svg viewBox="0 0 12 12"><path d="M6 2v5l-4 4M6 7l4 4M4 7h4" fill="none" stroke="#eef0f2" stroke-width="2"/></svg></button>
    <button>1:1 <i class="caret"></i></button>
    <button aria-label="Рабочее пространство"><svg viewBox="0 0 12 12"><circle cx="6" cy="6" r="3" fill="none" stroke="#eef0f2" stroke-width="2"/><path d="M6 1v2M6 9v2M1 6h2M9 6h2M2.5 2.5 4 4M8 8l1.5 1.5M9.500 2.500 8 4M4 8 2.500 9.500" stroke="#eef0f2" stroke-width="1.6"/></svg></button>
    <button aria-label="Выбор пространства"><i class="caret"></i></button>
    <button aria-label="Монитор аннотаций"><svg viewBox="0 0 12 12"><path d="M6 1v10M1 6h10" stroke="#fff" stroke-width="1.3"/></svg></button>
    <button aria-label="Изолировать объекты"><svg viewBox="0 0 12 12"><path d="M1 1h4v4H1zM6 7l3 4H3z" fill="none" stroke="#c4cbd2"/><circle cx="9" cy="4" r="2" fill="none" stroke="#c4cbd2"/></svg></button>
    <button aria-label="Производительность"><svg viewBox="0 0 12 12"><path d="M1 2h7v4H1z" fill="#4699d4"/><path d="M1 7h5v4H1z" fill="#e0b650"/><path d="m5 8 3 3 4-5" fill="none" stroke="#57ad6d" stroke-width="2"/></svg></button>
    <button aria-label="Очистить экран"><svg viewBox="0 0 12 12"><path d="M1 2h10v8H1zM3 8l2-2M3 6v2h2M9 4 7 6M7 4h2v2" fill="none" stroke="#c4cbd2" stroke-width=".9"/></svg></button>
    <button aria-label="Адаптация"><svg viewBox="0 0 12 12"><path d="M1 2h10M1 6h10M1 10h10" stroke="#fff" stroke-width="1.3"/></svg></button>
  </div>
</footer>
</main>
</body>
</html>
```

FILE: styles.css
```css
* { box-sizing: border-box; }
body {
  margin: 0;
  min-height: 100vh;
  display: flex;
  align-items: center;
  background: #fff;
  font: 7px/9px "Open Sans", "Noto Sans", sans-serif;
  color: #e0e4e8;
}
button, select, input { font: inherit; color: inherit; }
button { display: flex; align-items: center; justify-content: center; margin: 0; padding: 0; border: 0; background: none; }
a { color: inherit; text-decoration: none; }
svg { display: block; width: 11px; height: 11px; flex: none; }
.caret { flex: none; display: inline-block; width: 5px; height: 3px; background: #dce0e4; clip-path: polygon(0 0, 100% 0, 50% 100%); }
.with-caret { gap: 3px; }
.with-caret .caret { width: 4px; height: 2px; }

.window { width: 100%; border: solid #2c3747; border-width: 0 3px 2px 2px; background: #202933; }

/* Title bar and ribbon tabs */
.top { display: grid; grid-template: 18px 13px / 29px 1fr; background: #202933; }
.app-button { grid-row: 1 / 3; margin: 2px 4px 3px 1px; background: linear-gradient(#d5d5d7, #96989c); }
.app-button svg { width: 24px; height: 26px; }
.titlebar { display: grid; grid-template-columns: 116fr 38fr 371fr 116fr 153fr 80fr; align-items: center; min-width: 0; }
.quick { display: grid; grid-template-columns: repeat(8, 1fr); }
.history { display: flex; align-items: center; justify-content: space-between; padding-right: 2px; }
.history .caret { width: 3px; height: 2px; }
.history .wide { width: 5px; height: 4px; }
.title { display: flex; justify-content: center; gap: 7px; margin: 0; font-size: 7px; font-weight: 400; color: #fff; white-space: nowrap; }
.search { display: flex; align-items: center; gap: 3px; }
.play { width: 4px; height: 5px; }
.search input { flex: 1; min-width: 0; height: 12px; padding: 0 2px; border: 0; background: #465261; }
.search input::placeholder { color: #c2c8cf; font-style: italic; opacity: 1; }
.account { display: flex; align-items: center; justify-content: space-between; padding-left: 2px; }
.login { gap: 1px; white-space: nowrap; }
.login .caret { width: 4px; height: 2px; }
.help { padding-left: 5px; border-left: 1px solid #3b4550; }
.winctl { display: flex; justify-content: flex-end; gap: 4px; padding-right: 2px; }
.tabs { display: flex; align-items: stretch; gap: 3px; color: #b7bdc5; white-space: nowrap; }
.tabs a { padding: 1px 4px 2px; }
.tabs .active { background: #3a4352; color: #eef0f2; }
.tabs > button { margin-left: 8px; }
.tabs svg { width: 9px; height: 9px; }

/* Ribbon */
.ribbon {
  display: grid;
  grid-template-columns: 159fr 80fr 85fr 164fr 53fr 148fr 45fr 65fr 61fr 42fr;
  background: #3a4352;
}
.panel { display: flex; flex-direction: column; min-width: 0; padding-top: 1px; border-right: 1px solid #28313d; }
.panel:last-child { border: 0; }
.body { display: grid; height: 44px; }
.caption { display: flex; align-items: center; justify-content: center; gap: 3px; height: 14px; position: relative; white-space: nowrap; color: #e0e4e8; }
.caption button { gap: 3px; }
.with-launcher { padding-right: 8px; }
.launcher { position: absolute; right: 1px; top: 4px; }
.launcher svg { width: 6px; height: 6px; }
.tool { flex-direction: column; justify-content: flex-start; min-width: 0; text-align: center; }
.tool > svg { width: 23px; height: 23px; }
.tool > .caret { width: 4px; height: 2px; margin-top: 1px; }
.stack { display: grid; grid-template-rows: repeat(3, 1fr); justify-items: start; padding-left: 3px; }
.draw { grid-template-columns: 36fr 38fr 32fr 26fr 26fr; }
.edit { grid-template-columns: 18fr 17fr 26fr 19fr; grid-template-rows: repeat(3, 1fr); }
.annot { grid-template-columns: 35fr 25fr 25fr; }
.layers { grid-template-columns: 38fr 125fr; }
.layer-side { display: grid; grid-template-rows: 1fr 2fr; min-width: 0; }
.layer-grid { display: grid; grid-template-columns: repeat(5, 14px); grid-template-rows: 1fr 1fr; }
.combo { display: flex; align-items: center; gap: 2px; min-width: 0; height: 13px; margin: 0 1px 0 0; padding: 0 2px 0 0; background: #465364; border: 1px solid #4c5969; }
.combo select { flex: 1; min-width: 0; height: 11px; padding: 0; border: 0; appearance: none; background: none; overflow: hidden; }
.layer-combo { gap: 1px; padding-right: 1px; }
.layer-combo select { padding-left: 3px; }
.swatch { flex: none; width: 9px; height: 9px; background: #000; }
.block { grid-template-columns: 30fr 23fr; }
.props { grid-template-columns: 49fr 99fr; }
.prop-grid { display: grid; grid-template-columns: 15px 1fr; grid-template-rows: repeat(3, 1fr); align-items: center; min-width: 0; }
.prop-grid .swatch { margin: 0 4px 0 6px; }
.rule { flex: none; width: 39px; height: 1px; background: #cbd1d7; }
.pair { grid-template-columns: 27fr 18fr; }
.utilities { grid-template-columns: 46fr 18fr; }
.clipboard { grid-template-columns: 42fr 18fr; }

/* Open files */
.files { display: flex; height: 17px; padding: 1px 0 1px 10px; border-bottom: 1px solid #4d596b; background: #212b36; color: #b7bdc5; }
.files > a { width: 76px; padding: 3px 10px; background: #2b3541; clip-path: polygon(6px 0, 100% 0, 100% 100%, 0 100%); }
.current { display: flex; align-items: center; justify-content: space-between; width: 80px; padding: 0 9px 0 8px; background: #3a4352; color: #f0f2f4; clip-path: polygon(6px 0, 72px 0, 100% 100%, 0 100%); }
.current svg { width: 8px; height: 8px; }
.add { width: 15px; background: #2b3541; border-radius: 3px; }
.add svg { width: 8px; height: 8px; }

/* Drawing area */
.canvas { position: relative; display: flex; align-items: center; height: 504px; overflow: hidden; background: #dad8db; color: #333; }
.sheets { width: 100%; height: auto; }
.view-label { position: absolute; left: 3px; top: 5px; display: flex; color: #222; }
.doc-controls { position: absolute; right: 6px; top: 5px; display: flex; gap: 3px; }
.doc-controls svg { width: 9px; height: 9px; }
.compass { position: absolute; right: 5px; top: 18px; display: grid; grid-template: 24px 45px 24px / 22px 48px 22px; place-items: center; font-size: 11px; border-radius: 50%; background: radial-gradient(closest-side, #dad8db 58%, #dcdadd 64%, #dcdadd 86%, #dad8db); }
.compass button { color: #dddbde; font-weight: 700; -webkit-text-stroke: 2px #c0bec1; paint-order: stroke fill; }
.n { grid-column: 2; }
.w { grid-column: 1; grid-row: 2; }
.compass .cube { grid-column: 2; grid-row: 2; width: 32px; height: 32px; border: 1px solid #909092; background: radial-gradient(#e1e2e4, #f1f1f2); color: #77777a; font-size: 8px; font-weight: 400; -webkit-text-stroke: 0; }
.e { grid-column: 3; grid-row: 2; }
.s { grid-column: 2; grid-row: 3; }
.ucs-name { position: absolute; right: 35px; top: 117px; padding: 0 3px; gap: 2px; background: #dfdde4; color: #8b8994; }
.ucs-name svg { width: 8px; height: 4px; }
.navbar { position: absolute; right: 1px; top: 142px; width: 22px; height: 86px; border: 1px solid #a3a1a6; border-bottom: 0; border-radius: 3px 3px 0 0; }
.navbar svg { width: 100%; height: 100%; }
.ucs { position: absolute; left: 9px; bottom: 9px; width: 46px; height: 46px; }
.cursor { position: absolute; right: 0; bottom: 2px; width: 30px; height: 40px; }

/* Layout tabs and status bar */
.bottom { display: flex; justify-content: space-between; height: 18px; background: #202933; }
.layouts { display: flex; gap: 2px; height: 12px; padding-left: 8px; color: #b7bdc5; }
.layouts > * { padding: 1px 6px; background: #2d3742; border-radius: 0 0 4px 4px; }
.layouts .active { color: #fff; font-weight: 700; background: #384350; }
.layouts svg { width: 7px; height: 7px; }
.status {
  display: grid;
  grid-template-columns: 35px 15px 14px 10px 16px 15px 10px 13px 10px 14px 15px 10px 16px 15px 14px 15px 21px 16px 10px 15px 15px 16px 16px 14px;
  height: 15px;
  margin: 1px 3px 0 0;
  background: #35404e;
}
.status button { border-left: 1px solid #2c3642; white-space: nowrap; gap: 2px; }
.status .on { background: #568ac0; }
.status .caret { width: 4px; }
```
